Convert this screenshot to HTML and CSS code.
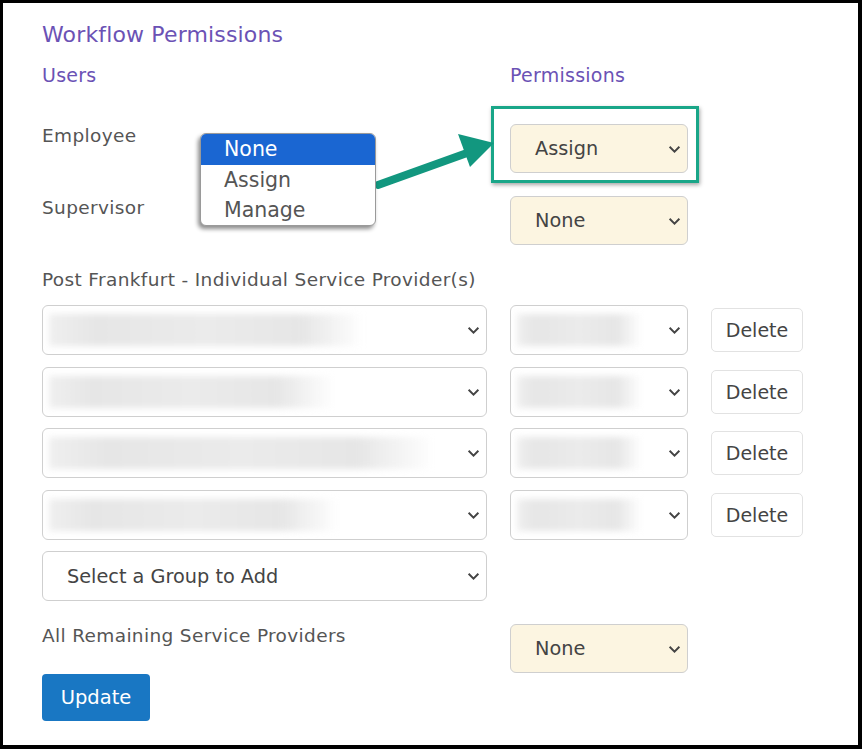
FILE: index.html
```html
<!DOCTYPE html>
<html>
<head>
<meta charset="utf-8">
<link rel="stylesheet" href="styles.css">
</head>
<body>
<div class="frame">
  <h1 class="title">Workflow Permissions</h1>
  <div class="grid">
    <div class="head">Users</div>
    <div class="head">Permissions</div>
    <div></div>

    <div class="label">Employee</div>
    <div class="select perm">Assign<svg class="chev" viewBox="0 0 12 8"><path d="M1.5 1.5 6 6l4.5-4.5"/></svg></div>
    <div></div>

    <div class="label">Supervisor</div>
    <div class="select perm">None<svg class="chev" viewBox="0 0 12 8"><path d="M1.5 1.5 6 6l4.5-4.5"/></svg></div>
    <div></div>

    <div class="label span3">Post Frankfurt - Individual Service Provider(s)</div>

    <div class="rows span3">
      <div class="row">
        <div class="select"><span class="blur" style="width:315px"></span><svg class="chev" viewBox="0 0 12 8"><path d="M1.5 1.5 6 6l4.5-4.5"/></svg></div>
        <div class="select"><span class="blur" style="width:125px"></span><svg class="chev" viewBox="0 0 12 8"><path d="M1.5 1.5 6 6l4.5-4.5"/></svg></div>
        <button class="btn-del">Delete</button>
      </div>
      <div class="row">
        <div class="select"><span class="blur" style="width:285px"></span><svg class="chev" viewBox="0 0 12 8"><path d="M1.5 1.5 6 6l4.5-4.5"/></svg></div>
        <div class="select"><span class="blur" style="width:125px"></span><svg class="chev" viewBox="0 0 12 8"><path d="M1.5 1.5 6 6l4.5-4.5"/></svg></div>
        <button class="btn-del">Delete</button>
      </div>
      <div class="row">
        <div class="select"><span class="blur" style="width:385px"></span><svg class="chev" viewBox="0 0 12 8"><path d="M1.5 1.5 6 6l4.5-4.5"/></svg></div>
        <div class="select"><span class="blur" style="width:125px"></span><svg class="chev" viewBox="0 0 12 8"><path d="M1.5 1.5 6 6l4.5-4.5"/></svg></div>
        <button class="btn-del">Delete</button>
      </div>
      <div class="row">
        <div class="select"><span class="blur" style="width:290px"></span><svg class="chev" viewBox="0 0 12 8"><path d="M1.5 1.5 6 6l4.5-4.5"/></svg></div>
        <div class="select"><span class="blur" style="width:125px"></span><svg class="chev" viewBox="0 0 12 8"><path d="M1.5 1.5 6 6l4.5-4.5"/></svg></div>
        <button class="btn-del">Delete</button>
      </div>
      <div class="row">
        <div class="select">Select a Group to Add<svg class="chev" viewBox="0 0 12 8"><path d="M1.5 1.5 6 6l4.5-4.5"/></svg></div>
      </div>
    </div>

    <div class="label">All Remaining Service Providers</div>
    <div class="select perm">None<svg class="chev" viewBox="0 0 12 8"><path d="M1.5 1.5 6 6l4.5-4.5"/></svg></div>
    <div></div>
  </div>
  <button class="btn-update">Update</button>

  <div class="highlight"></div>
  <svg class="arrow" viewBox="0 0 130 60" width="130" height="60">
    <line x1="6" y1="50" x2="95" y2="18" stroke="#12977f" stroke-width="8" stroke-linecap="round"/>
    <polygon points="122,8 86,-1 98,32" fill="#12977f"/>
  </svg>
  <div class="menu">
    <div class="opt active">None</div>
    <div class="opt">Assign</div>
    <div class="opt">Manage</div>
  </div>
</div>
</body>
</html>
```
FILE: styles.css
```css
* { box-sizing: border-box; }
html, body { margin: 0; padding: 0; background: #fff; }
body { font-family: "DejaVu Sans", "Open Sans", sans-serif; }

.frame {
  position: relative;
  width: 862px;
  height: 749px;
  border: 3px solid #000;
  border-right-width: 4px;
  border-bottom-width: 4px;
  padding: 17px 0 0 39px;
  color: #555;
}

.title {
  margin: 0;
  font-size: 22px;
  font-weight: 400;
  line-height: 30px;
  letter-spacing: 0.15px;
  color: #6b52b5;
}

.grid {
  display: grid;
  grid-template-columns: 445px 178px 92px;
  column-gap: 23px;
  row-gap: 23px;
  margin-top: 13px;
}
.grid .head:nth-child(1), .grid .head:nth-child(2) { margin-bottom: 14px; }

.head {
  font-size: 19px;
  line-height: 24px;
  letter-spacing: 0.25px;
  color: #6b52b5;
}

.label {
  font-size: 18.5px;
  line-height: 24px;
  color: #555;
  letter-spacing: 0.35px;
}
.span3 { grid-column: 1 / 4; }
.grid > .label.span3 { margin-bottom: -10px; }

.rows {
  display: flex;
  flex-direction: column;
  gap: 11.5px;
}
.row {
  display: grid;
  grid-template-columns: 445px 178px 92px;
  column-gap: 23px;
  align-items: center;
}

.select {
  position: relative;
  height: 50px;
  display: flex;
  align-items: center;
  padding-left: 24px;
  border: 1px solid #cfcfcf;
  border-radius: 6px;
  background: #fff;
  font-size: 19.3px;
  color: #444;
  overflow: hidden;
}
.select.perm { background: #fcf5e1; height: 49px; }

.chev {
  position: absolute;
  right: 6px;
  top: 50%;
  width: 13px;
  height: 9px;
  margin-top: -4px;
  fill: none;
  stroke: #444;
  stroke-width: 1.8;
}

.blur {
  position: absolute;
  left: 6px;
  top: 8px;
  bottom: 8px;
  background: linear-gradient(to right, #efefef 0%, #e6e6e6 15%, #ebebeb 50%, #e6e6e6 80%, rgba(235,235,235,0) 100%);
  filter: blur(3px);
}

.btn-del {
  height: 44px;
  width: 92px;
  padding: 0;
  border: 1px solid #e2e2e2;
  border-radius: 5px;
  background: #fff;
  font-family: inherit;
  font-size: 19px;
  color: #444;
}

.btn-update {
  display: block;
  width: 108px;
  height: 47px;
  margin-top: 1px;
  padding: 0;
  border: none;
  border-radius: 4px;
  background: #1977c3;
  color: #fff;
  font-family: inherit;
  font-size: 19.5px;
}

.highlight {
  position: absolute;
  left: 488px;
  top: 103px;
  width: 208px;
  height: 77px;
  border: 3px solid #19a688;
  box-shadow: 1px 2px 4px rgba(0,0,0,0.35);
}

.arrow {
  position: absolute;
  left: 369px;
  top: 132px;
  overflow: visible;
}

.menu {
  position: absolute;
  left: 197px;
  top: 130px;
  width: 176px;
  height: 93px;
  border: 1px solid #9a9a9a;
  border-radius: 6px;
  background: #fff;
  overflow: hidden;
  box-shadow: -2px 3px 4px rgba(0,0,0,0.45);
}
.opt {
  height: 30px;
  line-height: 30px;
  padding-left: 23px;
  font-size: 20.5px;
  color: #555;
}
.opt.active {
  background: #1a66d2;
  color: #fff;
  height: 31px;
}
```
